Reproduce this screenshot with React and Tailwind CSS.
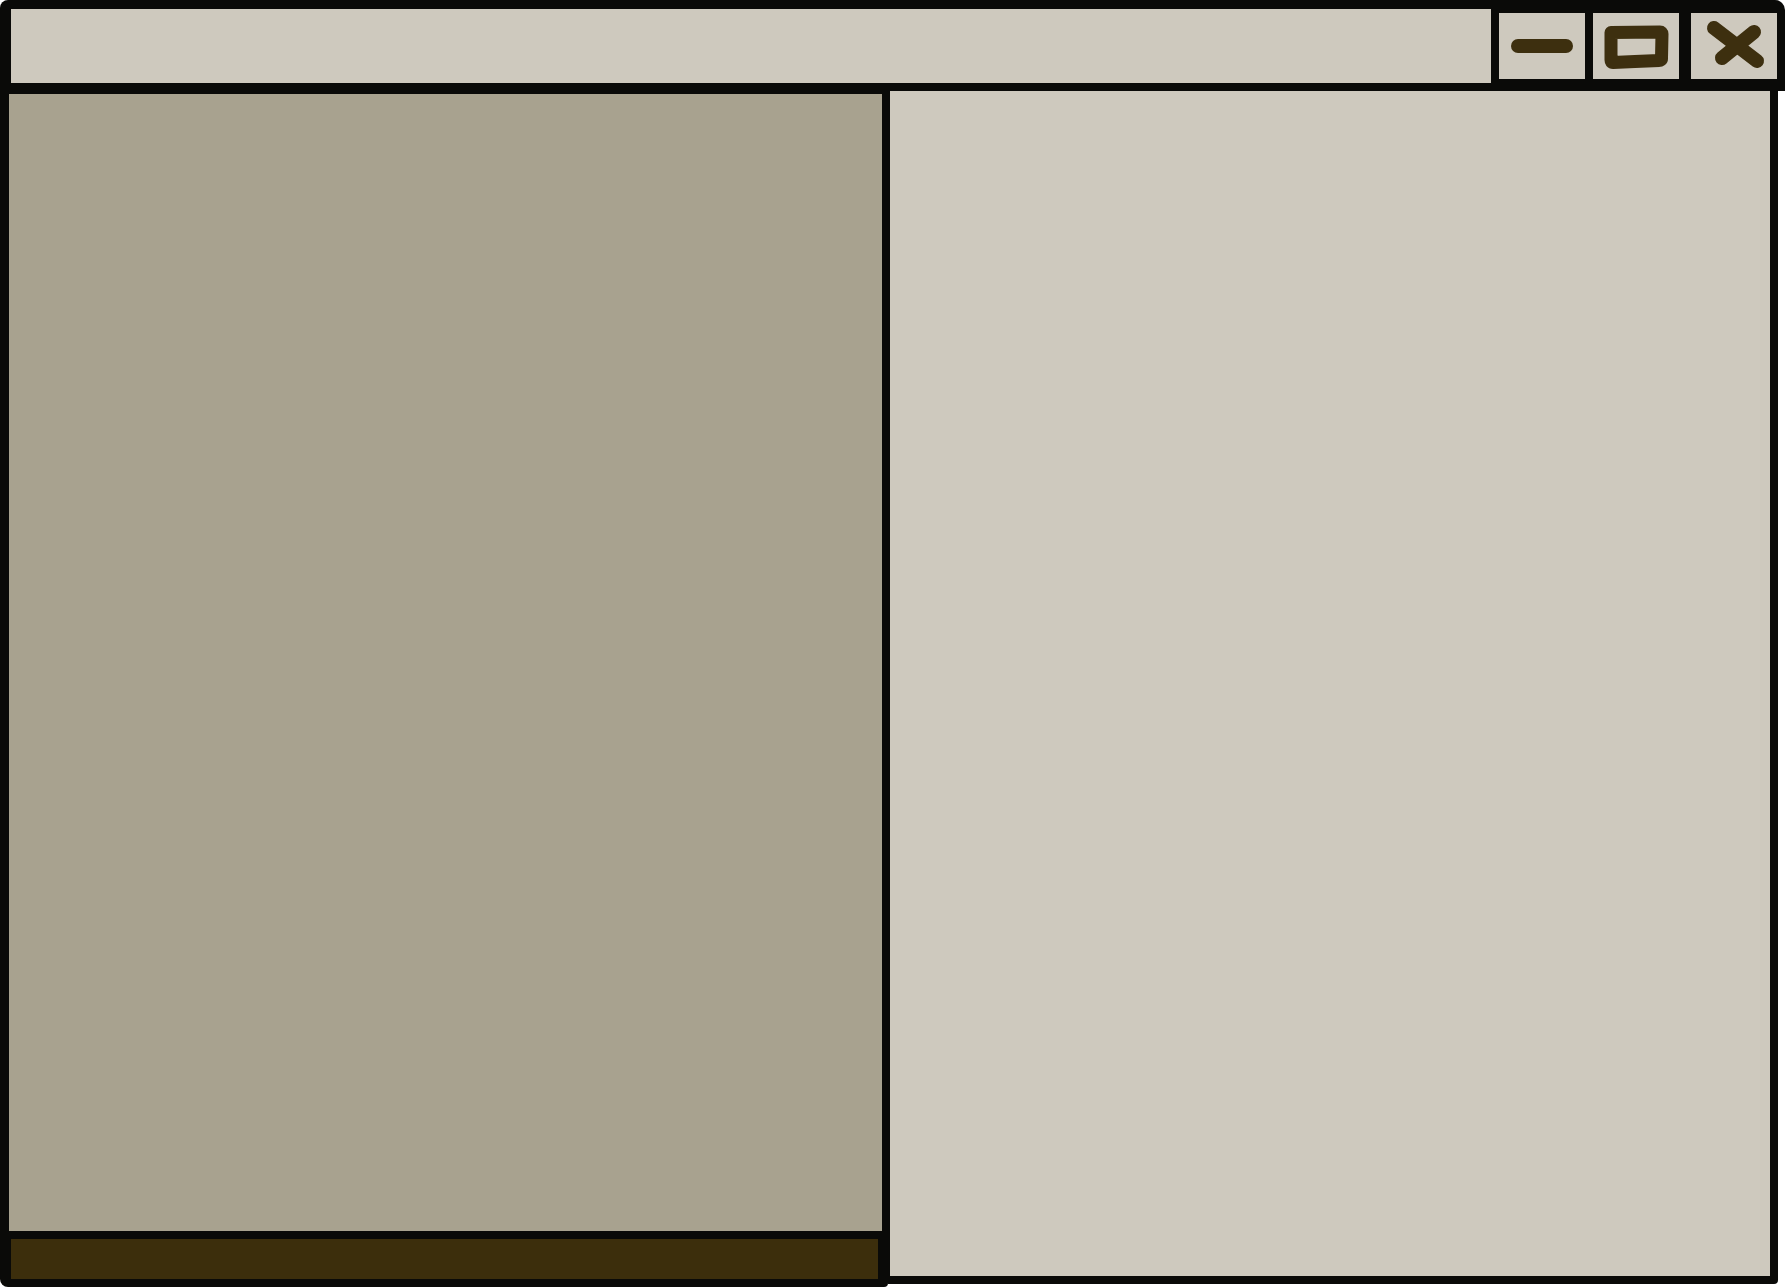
const ink = "#3d2f0f";

function MinIcon() {
  return (
    <svg width="86" height="66" viewBox="0 0 86 66" className="block">
      <line x1="19" y1="33" x2="67" y2="33" stroke={ink} strokeWidth="14" strokeLinecap="round" />
    </svg>
  );
}

function MaxIcon() {
  return (
    <svg width="86" height="66" viewBox="0 0 86 66" className="block">
      <path
        d="M18 19.5 L67 19 Q69 19 69 21 L68.5 45.5 Q68.5 47.5 66 47.5 L42 48.5 L20 49.5 Q18 49.5 18 47 Z"
        fill="none"
        stroke={ink}
        strokeWidth="13"
        strokeLinejoin="round"
      />
    </svg>
  );
}

function CloseIcon() {
  return (
    <svg width="86" height="66" viewBox="0 0 86 66" className="block">
      <line x1="23" y1="15" x2="66" y2="48" stroke={ink} strokeWidth="14" strokeLinecap="round" />
      <line x1="63" y1="19" x2="31" y2="45" stroke={ink} strokeWidth="14" strokeLinecap="round" />
    </svg>
  );
}

export default function App() {
  return (
    <div className="w-[1785px] h-[1287px] bg-white flex flex-col overflow-hidden">
      {/* title row */}
      <div className="h-[91px] bg-[#0a0a08] rounded-tl-[8px] rounded-tr-[10px] flex items-start pl-[11px] pr-[8px]">
        <div className="mt-[9px] h-[74px] flex-1 bg-[#cec9be]" />
        <div className="mt-[13px] ml-[8px] w-[86px] h-[66px] shrink-0 bg-[#cec9be]">
          <MinIcon />
        </div>
        <div className="mt-[13px] ml-[8px] w-[86px] h-[66px] shrink-0 bg-[#cec9be]">
          <MaxIcon />
        </div>
        <div className="mt-[13px] ml-[12px] w-[86px] h-[66px] shrink-0 bg-[#cec9be]">
          <CloseIcon />
        </div>
      </div>

      {/* body */}
      <div className="flex items-start">
        <div className="w-[888px] h-[1196px] bg-[#0a0a08] rounded-bl-[8px] rounded-br-[4px] flex flex-col pt-[3px] pl-[9px] pr-[6px]">
          <div className="h-[1137px] bg-[#a8a28f]" />
          <div className="mt-[8px] ml-[2px] mr-[4px] h-[40px] bg-[#3c2e0c]" />
        </div>
        <div className="w-[890px] h-[1193px] bg-[#0a0a08] rounded-br-[4px] pl-[2px] pr-[8px] pb-[8px]">
          <div className="h-full bg-[#cec9be]" />
        </div>
      </div>
    </div>
  );
}
